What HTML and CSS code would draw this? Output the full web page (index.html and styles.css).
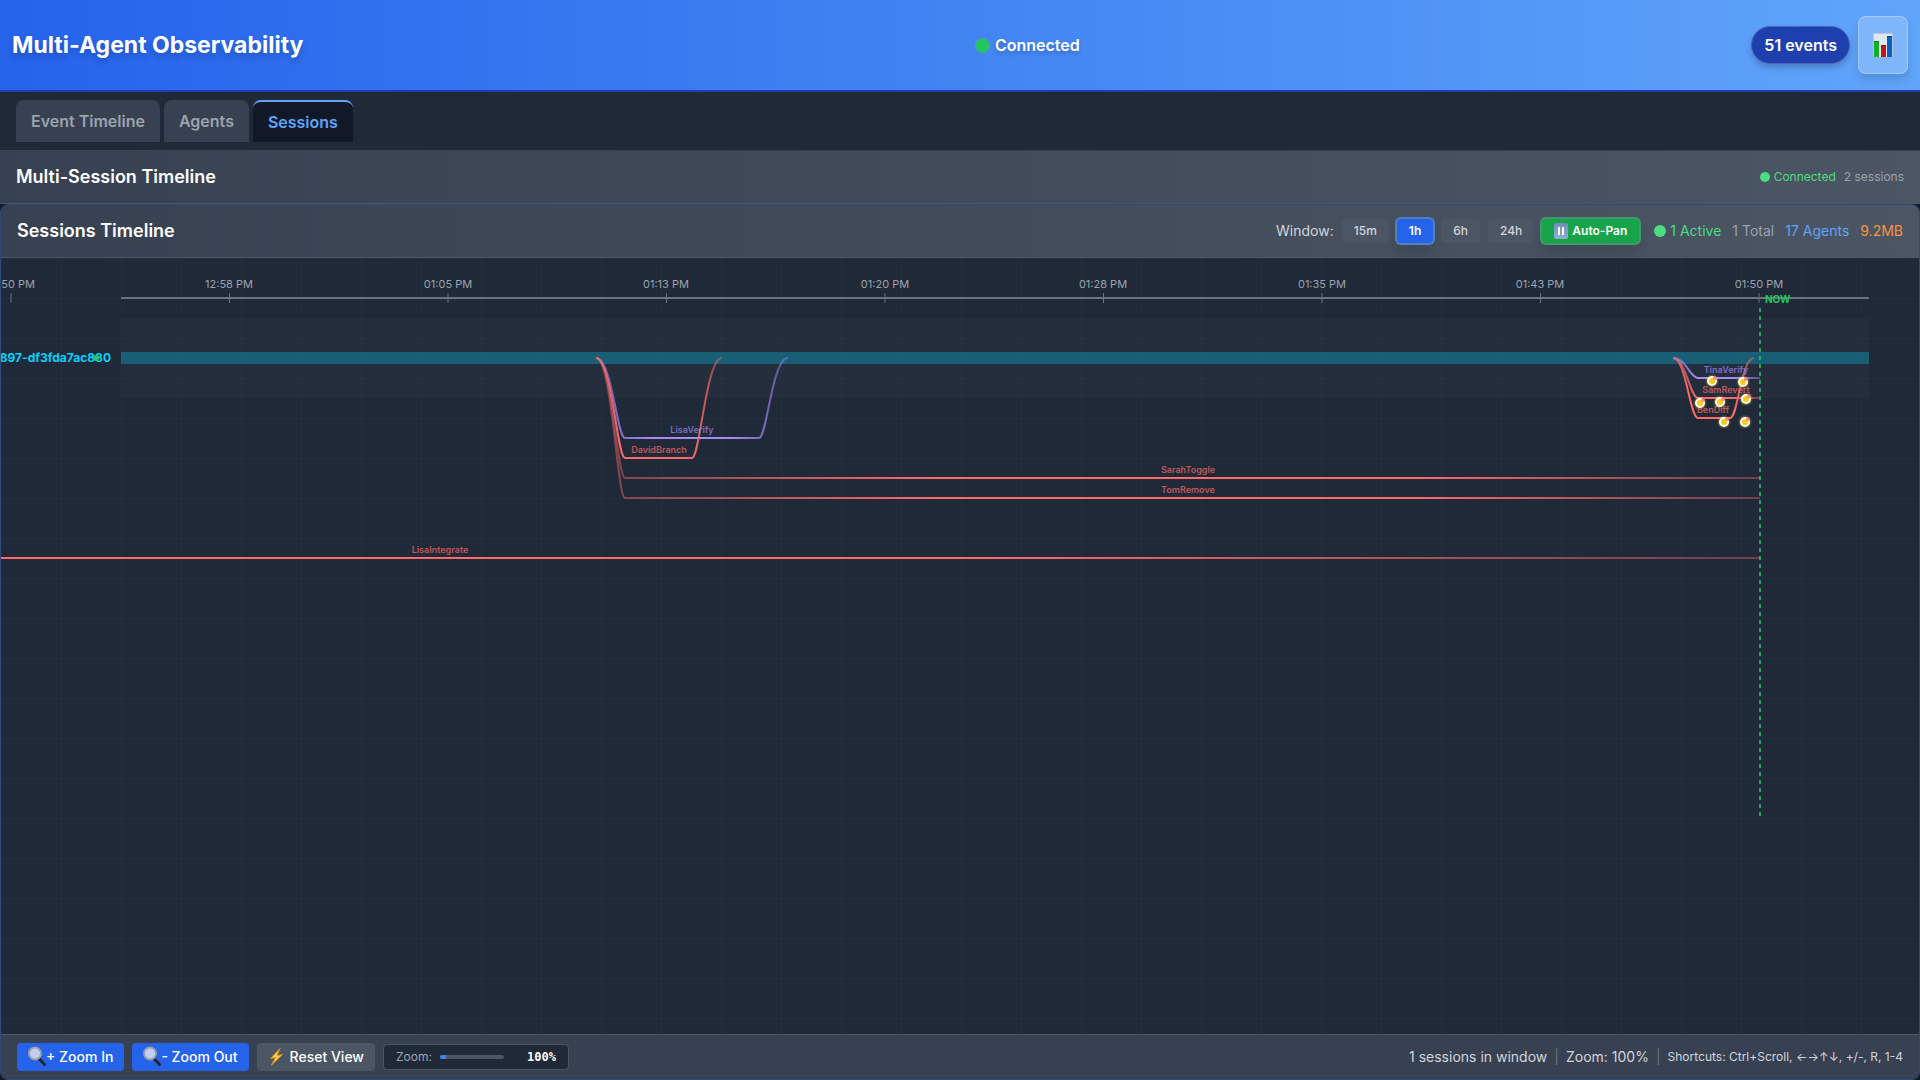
FILE: index.html
```html
<!DOCTYPE html>
<html lang="en">
<head>
<meta charset="utf-8">
<title>Multi-Agent Observability</title>
<link rel="stylesheet" href="styles.css">
</head>
<body>
<div class="app">
  <header class="app-header">
    <h1 class="app-title">Multi-Agent Observability</h1>
    <div class="connection"><span class="connection-dot"></span>Connected</div>
    <div class="header-actions">
      <span class="event-badge">51 events</span>
      <button class="stats-button" type="button" aria-label="Statistics">
        <svg width="20" height="24" viewBox="0 0 20 24" aria-hidden="true">
          <rect width="20" height="24" fill="#dde8f4"/>
          <path d="M0 .5H20M.5 0V24M19.5 0V24" stroke="#b9c9da" fill="none"/>
          <rect x="1" y="8" width="5" height="16" fill="#0fb31f"/>
          <rect x="8" y="12" width="5" height="12" fill="#c81414"/>
          <rect x="14" y="3" width="5" height="21" fill="#0a5fc4"/>
          <path d="M1 8.500H6M8 12.500H13M14 3.500H19" stroke="#00000055"/>
        </svg>
      </button>
    </div>
  </header>

  <nav class="tabs">
    <button class="tab" type="button">Event Timeline</button>
    <button class="tab" type="button">Agents</button>
    <button class="tab tab-active" type="button">Sessions</button>
  </nav>

  <section class="section-bar">
    <h2 class="section-title">Multi-Session Timeline</h2>
    <div class="section-status">
      <span class="status-live"><span class="live-dot"></span>Connected</span>
      <span class="muted">2 sessions</span>
    </div>
  </section>

  <main class="panel">
    <div class="panel-header">
      <h2 class="section-title">Sessions Timeline</h2>
      <div class="panel-tools">
        <div class="window-picker">
          <span class="window-label">Window:</span>
          <button class="chip" type="button">15m</button>
          <button class="chip chip-selected" type="button">1h</button>
          <button class="chip" type="button">6h</button>
          <button class="chip" type="button">24h</button>
          <button class="chip chip-pan" type="button">
            <svg width="14" height="16" viewBox="0 0 14 16" aria-hidden="true">
              <defs><linearGradient id="pauseFill" x2="0" y2="1"><stop stop-color="#6f8fb5"/><stop offset="1" stop-color="#8fb0d2"/></linearGradient></defs>
              <rect width="14" height="16" rx="2" fill="url(#pauseFill)"/>
              <path d="M5 4V12M9 4V12" stroke="#fff" stroke-width="2"/>
            </svg>
            Auto-Pan
          </button>
        </div>
        <div class="stats">
          <span class="status-live"><span class="live-dot live-dot-large"></span>1 Active</span>
          <span class="muted">1 Total</span>
          <span class="stat-agents">17 Agents</span>
          <span class="stat-memory">9.2MB</span>
        </div>
      </div>
    </div>

    <div class="chart">
      <svg class="chart-canvas" role="img" aria-label="Session timeline">
        <defs>
          <linearGradient id="fadeRed">
            <stop offset="0" stop-color="#ff6b6b" stop-opacity=".4"/>
            <stop offset=".3" stop-color="#ff6b6b"/>
            <stop offset=".7" stop-color="#ff6b6b"/>
            <stop offset="1" stop-color="#ff6b6b" stop-opacity=".35"/>
          </linearGradient>
          <linearGradient id="brightRed">
            <stop offset="0" stop-color="#ff6b6b" stop-opacity=".6"/>
            <stop offset=".2" stop-color="#ff6b6b"/>
            <stop offset=".75" stop-color="#ff6b6b"/>
            <stop offset="1" stop-color="#ff6b6b" stop-opacity=".4"/>
          </linearGradient>
          <linearGradient id="fadePurple">
            <stop offset="0" stop-color="#a78bfa" stop-opacity=".5"/>
            <stop offset=".3" stop-color="#a78bfa"/>
            <stop offset=".7" stop-color="#a78bfa"/>
            <stop offset="1" stop-color="#a78bfa" stop-opacity=".4"/>
          </linearGradient>
          <g id="message">
            <circle r="7" fill="#facc15" opacity=".12"/>
            <circle r="6" fill="#facc15" opacity=".16"/>
            <circle r="4" fill="#facc15" stroke="#fff" stroke-width="2"/>
            <circle cx="3" cy="-3" r="2" fill="#f87171" opacity=".8"/>
          </g>
        </defs>

        <path class="axis" d="M120 40H1868"/>
        <path class="ticks" d="M10 35v10M228.500 35v10M447 35v10M665.500 35v10M884 35v10M1102.500 35v10M1321 35v10M1539.500 35v10M1758 35v10"/>
        <g class="tick-labels">
          <text x="10" y="30">12:50 PM</text>
          <text x="228" y="30">12:58 PM</text>
          <text x="447" y="30">01:05 PM</text>
          <text x="665" y="30">01:13 PM</text>
          <text x="884" y="30">01:20 PM</text>
          <text x="1102" y="30">01:28 PM</text>
          <text x="1321" y="30">01:35 PM</text>
          <text x="1539" y="30">01:43 PM</text>
          <text x="1758" y="30">01:50 PM</text>
        </g>

        <rect class="lane" x="120" y="60" width="1748" height="80"/>
        <rect class="track" x="120" y="94" width="1748" height="12"/>
        <text class="track-label" x="110" y="104">897-df3fda7ac880</text>
        <circle cx="95" cy="100" r="3" fill="#22c55e"/>

        <path class="now-line" d="M1759 50V560"/>
        <text class="now-label" x="1764" y="45">NOW</text>

        <g class="agents">
          <path stroke="url(#fadePurple)" d="M595 100C611 100 616 180 624 180H758C766 180 771 100 787 100"/>
          <path stroke="url(#brightRed)" d="M595 100C611 100 616 200 624 200H691C699 200 705 100 721 100"/>
          <path stroke="url(#fadeRed)" d="M595 100C611 100 616 220 624 220H1759"/>
          <path stroke="url(#fadeRed)" d="M595 100C611 100 616 240 624 240H1759"/>
          <path stroke="url(#fadeRed)" d="M-880 100C-864 100 -859 300 -851 300H1759"/>
          <path stroke="url(#fadePurple)" d="M1672 100C1685 100 1689 120 1697 120H1759"/>
          <path stroke="url(#fadeRed)" d="M1672 100C1685 100 1689 140 1697 140H1759"/>
          <path stroke="url(#brightRed)" d="M1672 100C1685 100 1689 160 1697 160H1729C1737 160 1740 100 1753 100"/>
        </g>
        <g class="agent-labels">
          <text class="purple" x="691" y="175">LisaVerify</text>
          <text x="658" y="195">DavidBranch</text>
          <text x="1187" y="215">SarahToggle</text>
          <text x="1187" y="235">TomRemove</text>
          <text x="439" y="295">LisaIntegrate</text>
          <text class="purple" x="1725" y="115">TinaVerify</text>
          <text x="1725" y="135">SamRevert</text>
          <text x="1712" y="155">BenDiff</text>
        </g>

        <use href="#message" x="1711" y="123"/>
        <use href="#message" x="1742" y="124"/>
        <use href="#message" x="1699" y="145"/>
        <use href="#message" x="1719" y="144"/>
        <use href="#message" x="1745" y="141"/>
        <use href="#message" x="1723" y="164"/>
        <use href="#message" x="1744" y="164"/>
      </svg>
    </div>

    <footer class="panel-footer">
      <div class="zoom-tools">
        <button class="action" type="button">
          <svg width="18" height="22" viewBox="0 0 18 22" aria-hidden="true">
            <path d="M10.500 12L16.500 18.500" stroke="#20242c" stroke-width="3" stroke-linecap="round"/>
            <circle cx="7" cy="7.500" r="6" fill="#c3cff5" stroke="#9aa0aa" stroke-width="2"/>
          </svg>+ Zoom In</button>
        <button class="action" type="button">
          <svg width="18" height="22" viewBox="0 0 18 22" aria-hidden="true">
            <path d="M10.500 12L16.500 18.500" stroke="#20242c" stroke-width="3" stroke-linecap="round"/>
            <circle cx="7" cy="7.500" r="6" fill="#c3cff5" stroke="#9aa0aa" stroke-width="2"/>
          </svg>- Zoom Out</button>
        <button class="action action-reset" type="button">
          <svg width="18" height="22" viewBox="0 0 18 22" aria-hidden="true">
            <path d="M12 2.500L2.500 12.500L7.500 11.500L3.500 19L14.500 8.500L9 9.500Z" fill="#fdd24a" stroke="#d9921c"/>
          </svg>Reset View</button>
        <div class="zoom-readout">
          <span class="zoom-caption">Zoom:</span>
          <div class="zoom-bar"><div class="zoom-fill" style="width:10%"></div></div>
          <span class="zoom-value">100%</span>
        </div>
      </div>
      <div class="footer-info">
        <span>1 sessions in window</span>
        <span class="divider">|</span>
        <span>Zoom: 100%</span>
        <span class="divider">|</span>
        <span class="shortcuts">Shortcuts: Ctrl+Scroll, ←→↑↓, +/-, R, 1-4</span>
      </div>
    </footer>
  </main>
</div>
</body>
</html>
```
FILE: styles.css
```css
* {
  box-sizing: border-box;
}

body {
  margin: 0;
  background: #111827;
  color: #fff;
  font-family: Inter, "Liberation Sans", sans-serif;
  font-size: 14px;
  line-height: 20px;
}

button {
  border: 0;
  font-family: inherit;
  color: inherit;
  cursor: pointer;
}

h1, h2 {
  margin: 0;
}

.app {
  display: flex;
  flex-direction: column;
  min-height: 100vh;
}

.app-header {
  display: flex;
  align-items: center;
  justify-content: space-between;
  padding: 16px 12px;
  border-bottom: 2px solid #1e40af;
  background: linear-gradient(to right, #2563eb, #60a5fa);
}

.app-title {
  font-size: 23px;
  line-height: 32px;
  font-weight: 700;
  text-shadow: 0 4px 6px rgba(0, 0, 0, .2);
}

.connection {
  display: flex;
  align-items: center;
  gap: 5px;
  font-size: 16px;
  line-height: 24px;
  font-weight: 600;
  text-shadow: 0 3px 4px rgba(0, 0, 0, .2);
}

.connection-dot {
  width: 15px;
  height: 15px;
  border: 1px solid #3bb193;
  border-radius: 50%;
  background: #22c55e;
}

.header-actions {
  display: flex;
  align-items: center;
  gap: 8px;
}

.event-badge {
  padding: 6px 12px;
  border: 1px solid #5060bd;
  border-radius: 20px;
  background: #1e40af;
  box-shadow: 0 4px 6px rgba(0, 0, 0, .2);
  font-size: 16px;
  line-height: 24px;
  font-weight: 600;
}

.stats-button {
  display: flex;
  align-items: center;
  justify-content: center;
  width: 50px;
  height: 58px;
  border: 1px solid rgba(255, 255, 255, .3);
  border-radius: 8px;
  background: rgba(255, 255, 255, .2);
  box-shadow: 0 6px 10px rgba(0, 0, 0, .12);
}

.tabs {
  display: flex;
  gap: 4px;
  padding: 8px 16px;
  border-bottom: 1px solid #374151;
  background: #1f2937;
}

.tab {
  padding: 8px 15px;
  border-radius: 8px 8px 0 0;
  background: #374151;
  color: #9ca3af;
  font-size: 16px;
  line-height: 24px;
  font-weight: 600;
}

.tab-active {
  border-top: 2px solid #60a5fa;
  background: #111827;
  color: #60a5fa;
}

.section-bar,
.panel-header {
  display: flex;
  align-items: center;
  justify-content: space-between;
  padding: 12px 16px;
  border-bottom: 1px solid #4b5563;
  background: linear-gradient(to right, #374151, #4b5563);
}

.section-title {
  font-size: 18px;
  line-height: 28px;
  font-weight: 600;
}

.section-status {
  display: flex;
  gap: 8px;
  font-size: 12px;
  line-height: 16px;
}

.status-live {
  display: flex;
  align-items: center;
  gap: 4px;
  color: #4ade80;
}

.live-dot {
  width: 10px;
  height: 10px;
  border-radius: 50%;
  background: #4ade80;
}

.live-dot-large {
  width: 12px;
  height: 12px;
}

.muted {
  color: #9ca3af;
}

.panel {
  display: flex;
  flex: 1;
  flex-direction: column;
  overflow: hidden;
  border: 1px solid #304a78;
  border-radius: 8px;
}

.panel-tools,
.window-picker,
.stats {
  display: flex;
  align-items: center;
}

.panel-tools {
  gap: 15px;
}

.window-picker {
  gap: 8px;
}

.window-label {
  color: #d1d5db;
}

.chip {
  padding: 4px 12px;
  border-radius: 4px;
  background: #4b5563;
  color: #d1d5db;
  font-size: 12px;
  line-height: 16px;
  font-weight: 500;
}

.chip-selected,
.chip-pan {
  color: #fff;
  font-weight: 600;
}

.chip-selected {
  background: #2563eb;
  box-shadow: 0 0 0 2px #5080bd, 0 10px 14px rgba(0, 0, 0, .12);
}

.chip-pan {
  display: flex;
  align-items: center;
  gap: 4px;
  background: #16a34a;
  box-shadow: 0 0 0 2px #43976d, 0 10px 14px rgba(0, 0, 0, .12);
}

.stats {
  gap: 11px;
}

.stat-agents {
  color: #60a5fa;
}

.stat-memory {
  color: #fb923c;
}

.chart {
  display: flex;
  flex: 1;
  min-height: 600px;
  background:
    linear-gradient(to right, rgba(59, 130, 246, .06) 1px, transparent 1px) 0 0 / 60px 40px,
    linear-gradient(to bottom, rgba(59, 130, 246, .06) 1px, transparent 1px) 0 0 / 60px 40px,
    #1f2937;
}

.chart-canvas {
  flex: 1;
  width: 100%;
}

.axis {
  stroke: #6b7280;
  stroke-width: 2;
}

.ticks {
  stroke: #6b7280;
}

.tick-labels {
  fill: #9ca3af;
  font-size: 11px;
  text-anchor: middle;
}

.lane {
  fill: #374151;
  opacity: .2;
}

.track {
  fill: #00d4ff;
  opacity: .3;
}

.track-label {
  fill: #00d4ff;
  font-size: 12px;
  font-weight: 700;
  text-anchor: end;
}

.now-line {
  stroke: #22c55e;
  stroke-width: 2;
  stroke-dasharray: 4 4;
  opacity: .8;
}

.now-label {
  fill: #22c55e;
  font-size: 10px;
  font-weight: 700;
}

.agents path {
  fill: none;
  stroke-width: 2;
}

.agent-labels {
  fill: #ff6b6b;
  font-size: 9px;
  font-weight: 600;
  text-anchor: middle;
  opacity: .7;
}

.agent-labels .purple {
  fill: #a78bfa;
}

.panel-footer {
  display: flex;
  align-items: center;
  justify-content: space-between;
  padding: 8px 16px;
  border-top: 1px solid #4b5563;
  background: #374151;
}

.zoom-tools {
  display: flex;
  align-items: center;
  gap: 8px;
}

.action {
  display: flex;
  align-items: center;
  height: 28px;
  padding: 0 11px;
  border-radius: 4px;
  background: #2563eb;
  font-size: 14px;
  line-height: 20px;
  font-weight: 500;
}

.action-reset {
  gap: 4px;
  background: #4b5563;
}

.zoom-readout {
  display: flex;
  align-items: center;
  gap: 8px;
  padding: 4px 12px;
  border: 1px solid #4b5563;
  border-radius: 4px;
  background: #1f2937;
  font-size: 12px;
  line-height: 16px;
}

.zoom-caption {
  color: #9ca3af;
}

.zoom-bar {
  width: 64px;
  height: 4px;
  overflow: hidden;
  border-radius: 2px;
  background: #4b5563;
}

.zoom-fill {
  height: 100%;
  background: #3b82f6;
}

.zoom-value {
  min-width: 44px;
  font-family: "DejaVu Sans Mono", monospace;
  font-weight: 700;
  text-align: right;
}

.footer-info {
  display: flex;
  align-items: center;
  gap: 7px;
  color: #d1d5db;
}

.divider {
  color: #6b7280;
}

.shortcuts {
  font-size: 12px;
}
```
